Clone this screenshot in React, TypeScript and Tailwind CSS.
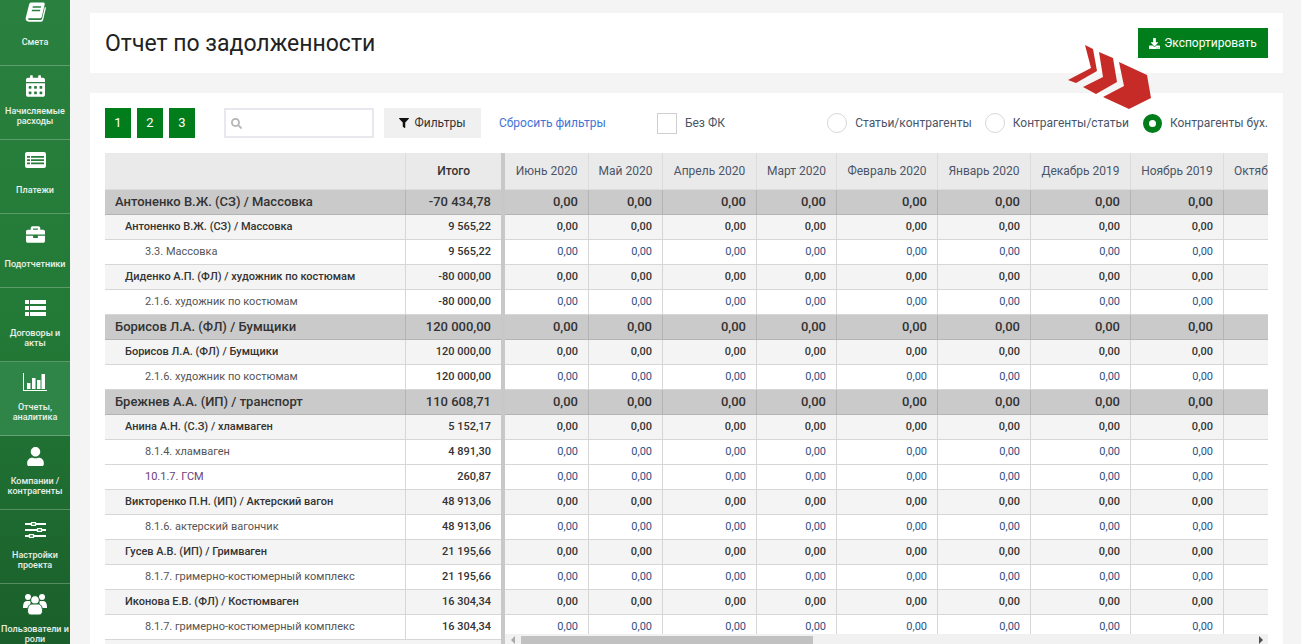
import React from "react";
import { FaCalendarAlt, FaBriefcase, FaUser, FaFilter, FaSearch, FaDownload } from "react-icons/fa";

const BookIcon = () => (
  <svg viewBox="0 0 24 24" className="w-[21px] h-[22px]" fill="currentColor">
    <path d="M7 1h14c1.200 0 1.800 1 1.500 2l-3.200 14c-.3 1.300-1.100 2-2.300 2H4.500c-1.200 0-1.500 1-.8 1.600.3.300.8.400 1.300.400h13c.7 0 1.200-.3 1.400-.9l3.300-14.100c.8.400 1.300 1.100 1 2.200l-3 13c-.3 1.200-1.200 1.800-2.400 1.800H4.300C2 23 .5 21.400.7 19.200c.1-.8.300-1.500.5-2.200L4.700 3.300C5 2 5.800 1 7 1zm2 4.500l-.4 1.500h9.500l.4-1.500H9zm-1 4l-.4 1.500h9.500l.4-1.500H8z" />
  </svg>
);
const ChartIcon = () => (
  <svg viewBox="0 0 24 18" className="w-[24px] h-[18px]" fill="currentColor">
    <path d="M0 0h1v17h23v1H0z" />
    <rect x="4" y="10" width="3.500" height="6" />
    <rect x="9" y="5" width="3.500" height="11" />
    <rect x="14" y="7" width="3.500" height="9" />
    <rect x="18.500" y="1" width="3.500" height="15" />
  </svg>
);
const PayIcon = () => (
  <svg viewBox="0 0 21 16" className="w-[21px] h-[16px]" fill="currentColor" fillRule="evenodd">
    <path d="M2 0h17a2 2 0 0 1 2 2v12a2 2 0 0 1-2 2H2a2 2 0 0 1-2-2V2a2 2 0 0 1 2-2zM2 4v1.800h3V4H2zm4 0v1.800h13V4H6zM2 7.200V9h3V7.200H2zm4 0V9h13V7.200H6zM2 10.400v1.800h3v-1.800H2zm4 0v1.800h13v-1.800H6z" />
  </svg>
);
const ListIcon = () => (
  <svg viewBox="0 0 21 16" className="w-[21px] h-[16px]" fill="currentColor">
    <rect x="0" y="0" width="4" height="4" />
    <rect x="5" y="0" width="16" height="4" />
    <rect x="0" y="6" width="4" height="4" />
    <rect x="5" y="6" width="16" height="4" />
    <rect x="0" y="12" width="4" height="4" />
    <rect x="5" y="12" width="16" height="4" />
  </svg>
);
const SliderIcon = () => (
  <svg viewBox="0 0 21 16" className="w-[21px] h-[16px]">
    <g fill="white">
      <rect x="0" y="1" width="21" height="2" />
      <rect x="0" y="7" width="21" height="2" />
      <rect x="0" y="13" width="21" height="2" />
    </g>
    <g fill="#237a37" stroke="white" strokeWidth="1.200">
      <rect x="6.500" y="0.600" width="4" height="2.800" />
      <rect x="12.500" y="6.600" width="4" height="2.800" />
      <rect x="4.500" y="12.600" width="4" height="2.800" />
    </g>
  </svg>
);
const UsersIcon = () => (
  <svg viewBox="0 0 24 22" className="w-[24px] h-[22px]" fill="white">
    <circle cx="5" cy="4" r="3" />
    <circle cx="19" cy="4" r="3" />
    <path d="M0 14c0-4 1.500-6 3.500-6h4v7H0zM24 14c0-4-1.500-6-3.500-6h-4v7H24z" />
    <circle cx="12" cy="7" r="4.300" stroke="#1e6b30" strokeWidth="1" />
    <path d="M4.500 18c0-4.500 2-7 4.500-7h6c2.500 0 4.500 2.500 4.500 7 0 2.500-1.500 4-3.500 4H8c-2 0-3.500-1.500-3.500-4z" stroke="#1e6b30" strokeWidth="1" />
  </svg>
);

const nav: { icon: React.ReactNode; label: string[]; active?: boolean }[] = [
  { icon: <BookIcon />, label: ["Смета"] },
  { icon: <FaCalendarAlt className="w-[19px] h-[22px]" />, label: ["Начисляемые", "расходы"] },
  { icon: <PayIcon />, label: ["Платежи"] },
  { icon: <FaBriefcase className="w-[21px] h-[19px]" />, label: ["Подотчетники"] },
  { icon: <ListIcon />, label: ["Договоры и", "акты"] },
  { icon: <ChartIcon />, label: ["Отчеты,", "аналитика"], active: true },
  { icon: <FaUser className="w-[17px] h-[19px]" />, label: ["Компании /", "контрагенты"] },
  { icon: <SliderIcon />, label: ["Настройки", "проекта"] },
  { icon: <UsersIcon />, label: ["Пользователи и", "роли"] },
];

const cols = [
  { t: "Июнь 2020", w: "w-[84px]" },
  { t: "Май 2020", w: "w-[74px]" },
  { t: "Апрель 2020", w: "w-[94px]" },
  { t: "Март 2020", w: "w-[80px]" },
  { t: "Февраль 2020", w: "w-[101px]" },
  { t: "Январь 2020", w: "w-[93px]" },
  { t: "Декабрь 2019", w: "w-[100px]" },
  { t: "Ноябрь 2019", w: "w-[93px]" },
  { t: "Октябрь 2019", w: "w-[98px]" },
];

type Kind = "g" | "s" | "i";
const rows: { k: Kind; n: string; v: string; purple?: boolean }[] = [
  { k: "g", n: "Антоненко В.Ж. (СЗ) / Массовка", v: "-70 434,78" },
  { k: "s", n: "Антоненко В.Ж. (СЗ) / Массовка", v: "9 565,22" },
  { k: "i", n: "3.3. Массовка", v: "9 565,22" },
  { k: "s", n: "Диденко А.П. (ФЛ) / художник по костюмам", v: "-80 000,00" },
  { k: "i", n: "2.1.6. художник по костюмам", v: "-80 000,00" },
  { k: "g", n: "Борисов Л.А. (ФЛ) / Бумщики", v: "120 000,00" },
  { k: "s", n: "Борисов Л.А. (ФЛ) / Бумщики", v: "120 000,00" },
  { k: "i", n: "2.1.6. художник по костюмам", v: "120 000,00" },
  { k: "g", n: "Брежнев А.А. (ИП) / транспорт", v: "110 608,71" },
  { k: "s", n: "Анина А.Н. (С.З) / хламваген", v: "5 152,17" },
  { k: "i", n: "8.1.4. хламваген", v: "4 891,30" },
  { k: "i", n: "10.1.7. ГСМ", v: "260,87", purple: true },
  { k: "s", n: "Викторенко П.Н. (ИП) / Актерский вагон", v: "48 913,06" },
  { k: "i", n: "8.1.6. актерский вагончик", v: "48 913,06" },
  { k: "s", n: "Гусев А.В. (ИП) / Гримваген", v: "21 195,66" },
  { k: "i", n: "8.1.7. гримерно-костюмерный комплекс", v: "21 195,66" },
  { k: "s", n: "Иконова Е.В. (ФЛ) / Костюмваген", v: "16 304,34" },
  { k: "i", n: "8.1.7. гримерно-костюмерный комплекс", v: "16 304,34" },
];

const rowBg: Record<Kind, string> = {
  g: "bg-[#cacaca] border-[#b4b4b4] text-[13px] font-medium text-[#333]",
  s: "bg-[#f4f4f4] border-[#d6d6d6] text-[11px] font-medium text-[#333]",
  i: "bg-white border-[#d6d6d6] text-[11px] text-[#555]",
};
const namePad: Record<Kind, string> = { g: "pl-[10px]", s: "pl-[20px]", i: "pl-[40px]" };

const Radio = ({ label, on }: { label: string; on?: boolean }) => (
  <div className={`flex items-center gap-[8px] ${on ? "ml-[1px]" : ""}`}>
    {on ? (
      <span className="w-[19px] h-[19px] rounded-full border-[6px] border-[#017d1c] bg-white" />
    ) : (
      <span className="w-[20px] h-[20px] rounded-full border border-[#d8d8d8] bg-white" />
    )}
    <span className="text-[12px] text-[#4a5568] whitespace-nowrap">{label}</span>
  </div>
);

export default function App() {
  return (
    <div className="flex h-screen w-full overflow-hidden bg-[#f4f4f4] font-['Roboto',sans-serif]">
      <aside className="w-[70px] shrink-0 overflow-hidden bg-gradient-to-b from-[#2a803e] via-[#237a37] to-[#1a5f2b]">
        <div className="-mt-[9px]">
          {nav.map((n, i) => (
            <div
              key={n.label[0]}
              className={`${i === 0 ? "h-[75px]" : "h-[74px]"} flex flex-col items-center justify-end border-b border-white/25 text-white ${n.active ? "bg-[#2f8548]" : ""}`}
            >
              <div className="h-[24px] flex items-center justify-center">{n.icon}</div>
              <div className="h-[24px] mt-[6px] mb-[11px] flex flex-col items-center justify-center text-[9px] leading-[10px] font-medium text-white/90 whitespace-nowrap">
                {n.label.map((l) => (
                  <span key={l}>{l}</span>
                ))}
              </div>
            </div>
          ))}
        </div>
      </aside>

      <main className="flex-1 min-w-0 flex flex-col pt-[13px] pl-[20px] pr-[18px] gap-[20px]">
        <section className="h-[60px] shrink-0 bg-white flex items-center justify-between pl-[15px] pr-[15px]">
          <h1 className="text-[23px] text-[#222] mt-[2px]">Отчет по задолженности</h1>
          <button className="w-[130px] h-[30px] bg-[#017d1c] text-white text-[12px] flex items-center justify-center gap-[4px]">
            <FaDownload className="w-[11px] h-[11px]" />
            Экспортировать
          </button>
        </section>

        <section className="flex-1 min-h-0 bg-white px-[15px] pt-[15px] flex flex-col overflow-hidden">
          <div className="h-[30px] shrink-0 flex items-center">
            <div className="flex gap-[6px]">
              {["1", "2", "3"].map((x) => (
                <button key={x} className="w-[26px] h-[30px] bg-[#017d1c] text-white text-[13px]">
                  {x}
                </button>
              ))}
            </div>
            <div className="ml-[29px] w-[150px] h-[30px] border-2 border-[#e8e8ee] flex items-center pl-[5px]">
              <FaSearch className="w-[11px] h-[11px] text-[#b5b5b5]" />
            </div>
            <button className="ml-[10px] w-[97px] h-[30px] bg-[#f0f0f0] text-[#333] text-[12px] flex items-center justify-center gap-[5px]">
              <FaFilter className="w-[10px] h-[10px] text-[#111]" />
              Фильтры
            </button>
            <a className="ml-[18px] text-[12px] text-[#3f75d6]">Сбросить фильтры</a>
            <div className="ml-[51px] flex items-center gap-[8px]">
              <span className="w-[20px] h-[21px] border border-[#cfcfcf] bg-white" />
              <span className="text-[12px] text-[#4a5568]">Без ФК</span>
            </div>
            <div className="ml-auto flex items-center gap-[13px]">
              <Radio label="Статьи/контрагенты" />
              <Radio label="Контрагенты/статьи" />
              <Radio label="Контрагенты бух." on />
            </div>
          </div>

          <div className="mt-[15px] flex-1 min-h-0 flex overflow-hidden">
            <div className="w-[396px] shrink-0">
              <div className="h-[37px] flex bg-[#eaeaea] border-b border-[#dcdcdc]">
                <div className="w-[300px]" />
                <div className="w-[96px] border-l border-[#dcdcdc] flex items-center justify-end pr-[31px] text-[12px] font-medium text-[#333]">
                  Итого
                </div>
              </div>
              {rows.map((r, i) => (
                <div key={i} className={`h-[25px] flex items-center border-b ${rowBg[r.k]}`}>
                  <div className={`w-[300px] ${namePad[r.k]} whitespace-nowrap ${r.purple ? "text-[#6b3f7a]" : ""}`}>{r.n}</div>
                  <div className={`w-[96px] h-full flex items-center justify-end pr-[10px] border-l border-inherit font-medium ${r.k === "g" ? "" : "text-[#333]"}`}>
                    {r.v}
                  </div>
                </div>
              ))}
              <div className="h-[25px] bg-[#f4f4f4]" />
            </div>
            <div className="w-[4px] shrink-0 bg-[#c8c8c8]" />
            <div className="flex-1 min-w-0 flex flex-col overflow-hidden">
              <div className="flex-1 min-h-0 overflow-hidden">
                <div className="h-[37px] flex bg-[#eaeaea] border-b border-[#dcdcdc] w-max">
                  {cols.map((c) => (
                    <div
                      key={c.t}
                      className={`${c.w} shrink-0 border-r border-[#dcdcdc] flex items-center justify-center text-[12px] text-[#4a5568] whitespace-nowrap`}
                    >
                      {c.t}
                    </div>
                  ))}
                </div>
                {rows.map((r, i) => (
                  <div key={i} className={`h-[25px] flex w-max border-b ${rowBg[r.k]}`}>
                    {cols.map((c) => (
                      <div
                        key={c.t}
                        className={`${c.w} shrink-0 h-full border-r border-inherit flex items-center justify-end pr-[10px] ${r.k === "i" ? "text-[#2f4f7f]" : ""}`}
                      >
                        0,00
                      </div>
                    ))}
                  </div>
                ))}
              </div>
              <div className="h-[10px] shrink-0 bg-[#f1f1f1] flex items-end">
                <span className="w-[16px] h-[8px] flex items-center justify-center">
                  <span className="border-y-[4px] border-y-transparent border-r-[4px] border-r-[#a8a8a8]" />
                </span>
                <div className="w-[292px] h-[8px] bg-[#c1c1c1]" />
                <span className="ml-auto w-[14px] h-[8px] flex items-center justify-center">
                  <span className="border-y-[4px] border-y-transparent border-l-[4px] border-l-[#505050]" />
                </span>
              </div>
            </div>
          </div>
        </section>
      </main>

      <svg className="absolute left-[1068px] top-[45px] w-[85px] h-[65px]" viewBox="0 0 85 65" fill="#c62b27">
        <polygon points="51,17 79,30 83,53 61,64 35,52 56,41" />
        <polygon points="31,7 45,13 49,37 28,49 15,42 35,32" />
        <polygon points="17,0 25,4 29,26 8,38 0,35 23,23" />
      </svg>
    </div>
  );
}
